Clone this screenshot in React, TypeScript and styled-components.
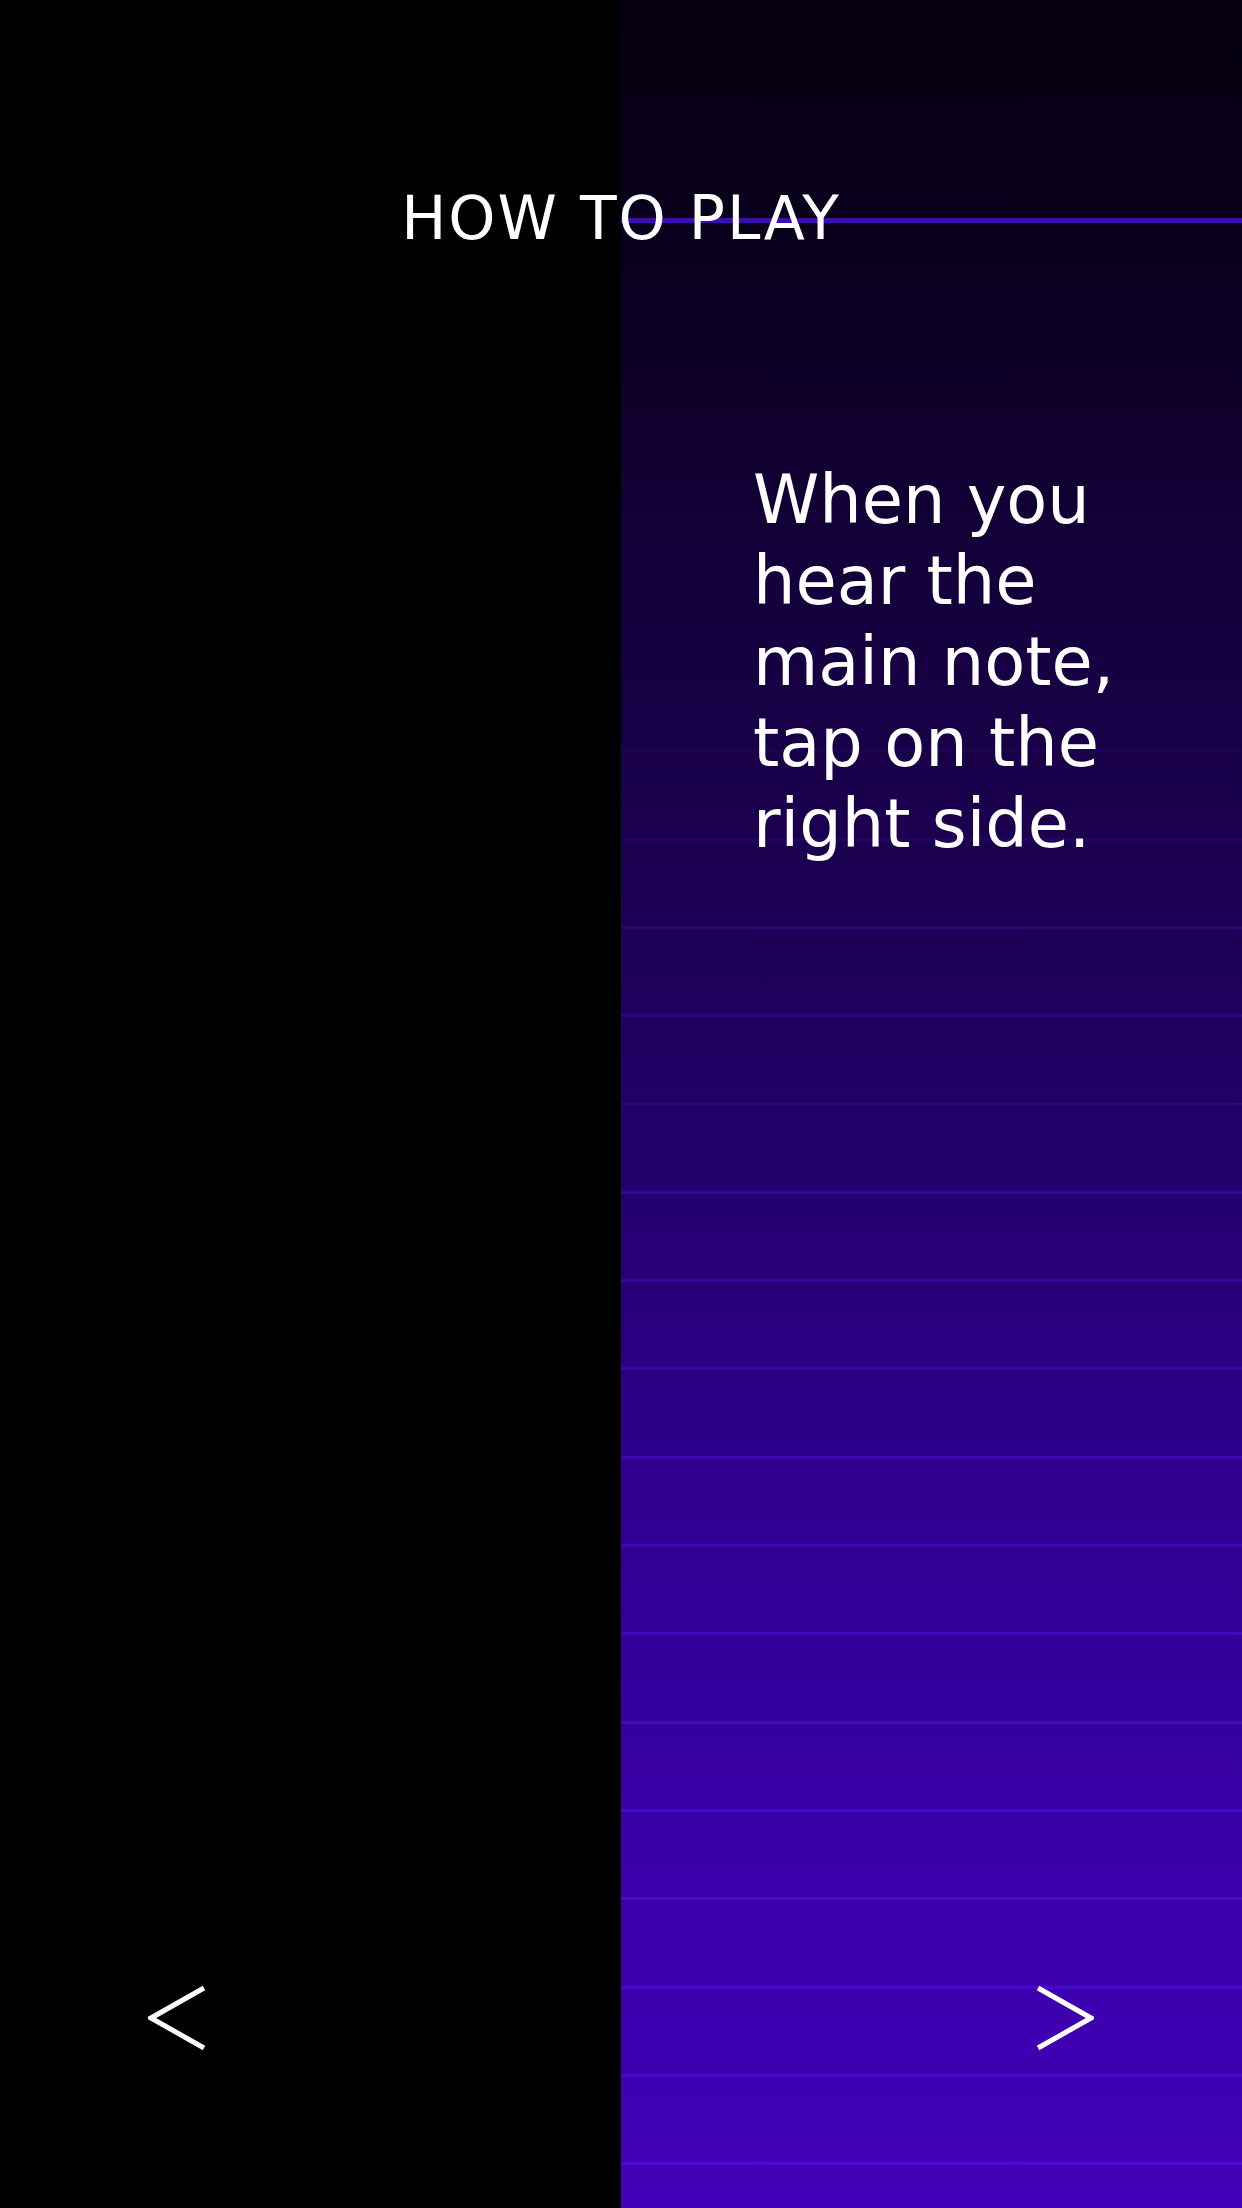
import * as React from "react";
import styled, { createGlobalStyle } from "styled-components";

const GlobalStyle = createGlobalStyle`
    html, body {
        margin: 0;
        padding: 0;
        background: #000;
    }
    * {
        box-sizing: border-box;
    }
`

const Screen = styled.div`
    display: grid;
    grid-template-columns: 1fr 1fr;
    grid-template-rows: auto 1fr auto;
    width: 1242px;
    height: 2208px;
    overflow: hidden;
    font-family: "DejaVu Sans", "Noto Sans", sans-serif;
    color: #fff;
`

const LeftSide = styled.div`
    grid-column: 1;
    grid-row: 1 / -1;
    background: #000;
`

const RightSide = styled.div`
    position: relative;
    grid-column: 2;
    grid-row: 1 / -1;
    background:
        linear-gradient(to bottom, transparent 218px, #3a0fae 218px, #3a0fae 223px, transparent 223px),
        linear-gradient(180deg, #050010 0%, #0a001e 12%, #130039 25%, #1c0052 40%, #23006a 52%, #2d008a 65%, #3900a6 82%, #4200b8 100%);

    /* horizontal lane lines, fading in towards the bottom */
    &::after {
        content: "";
        position: absolute;
        inset: 0;
        background: repeating-linear-gradient(
            to bottom,
            transparent 0px,
            transparent 42.66px,
            rgba(90, 30, 255, 0.4) 42.66px,
            rgba(90, 30, 255, 0.4) 45.66px,
            transparent 45.66px,
            transparent 88.32px
        );
        -webkit-mask-image: linear-gradient(to bottom, transparent 30%, rgba(0,0,0,0.5) 45%, #000 100%);
        mask-image: linear-gradient(to bottom, transparent 30%, rgba(0,0,0,0.5) 45%, #000 100%);
    }
`

const Title = styled.h1`
    position: relative;
    z-index: 2;
    grid-column: 1 / -1;
    grid-row: 1;
    margin: 0;
    padding-top: 182px;
    font-size: 60px;
    line-height: 72px;
    font-weight: 400;
    letter-spacing: 2px;
    text-align: center;
`

const Hint = styled.p`
    position: relative;
    z-index: 2;
    grid-column: 2;
    grid-row: 2;
    align-self: start;
    width: 400px;
    margin: 206px 0 0 132px;
    font-size: 67px;
    line-height: 81px;
    font-weight: 400;
`

const NavButton = styled.button<{ $side: "left" | "right" }>`
    position: relative;
    z-index: 2;
    grid-row: 3;
    grid-column: ${p => (p.$side === "left" ? 1 : 2)};
    justify-self: ${p => (p.$side === "left" ? "start" : "end")};
    margin: ${p => (p.$side === "left" ? "0 0 157px 148px" : "0 148px 157px 0")};
    padding: 0;
    border: 0;
    background: transparent;
    display: flex;
    cursor: pointer;
`

const Chevron = ({ dir }: { dir: "left" | "right" }) => (
    <svg width="60" height="66" viewBox="0 0 60 66">
        <polyline
            points={dir === "left" ? "56,3 3,33 56,63" : "4,3 57,33 4,63"}
            fill="none"
            stroke="#fff"
            strokeWidth="5"
            strokeLinejoin="miter"
        />
    </svg>
)

export default function App() {
    return (
        <>
            <GlobalStyle />
            <Screen>
                <LeftSide />
                <RightSide />
                <Title>HOW TO PLAY</Title>
                <Hint>When you hear the main note, tap on the right side.</Hint>
                <NavButton $side="left" aria-label="previous">
                    <Chevron dir="left" />
                </NavButton>
                <NavButton $side="right" aria-label="next">
                    <Chevron dir="right" />
                </NavButton>
            </Screen>
        </>
    );
}
